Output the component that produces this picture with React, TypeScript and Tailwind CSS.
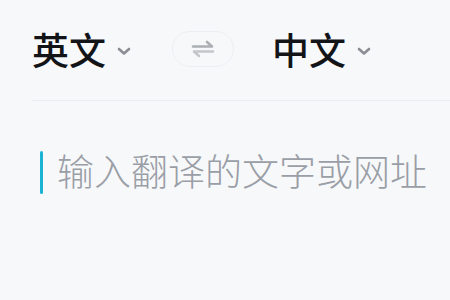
import React from "react";

function Chevron() {
  return (
    <svg width="14" height="9" viewBox="0 0 14 9" className="ml-[11px] mt-[4px]">
      <path d="M2 2l5 4.5L12 2" fill="none" stroke="#8a8d93" strokeWidth="2.6" strokeLinecap="round" strokeLinejoin="round" />
    </svg>
  );
}

function SwapIcon() {
  return (
    <svg width="24" height="18" viewBox="0 0 24 18">
      <path d="M2 6.5h19M16 2l5 4.5" fill="none" stroke="#acafb3" strokeWidth="2.6" strokeLinecap="round" strokeLinejoin="round" />
      <path d="M22 11.5H3M8 16l-5-4.5" fill="none" stroke="#c4c6ca" strokeWidth="2.6" strokeLinecap="round" strokeLinejoin="round" />
    </svg>
  );
}

export default function App() {
  return (
    <div
      className="h-[300px] w-[450px] overflow-hidden bg-[#f7f8fa]"
      style={{ fontFamily: '"Noto Sans CJK SC", "Noto Sans", sans-serif' }}
    >
      <div className="ml-[32px] flex h-[101px] items-center border-b border-[#eceef1] pb-[2px]">
        <div className="flex items-center">
          <span className="text-[37px] font-medium leading-none text-[#121418]">英文</span>
          <Chevron />
        </div>
        <button className="ml-[41px] flex h-[36px] w-[62px] items-center justify-center rounded-full border border-[#eceef1]">
          <SwapIcon />
        </button>
        <div className="ml-[38px] flex items-center">
          <span className="text-[37px] font-medium leading-none text-[#121418]">中文</span>
          <Chevron />
        </div>
      </div>
      <div className="ml-[40px] mt-[50px] flex items-center whitespace-nowrap">
        <div className="h-[43px] w-[3px] shrink-0 rounded-full bg-[#1ab3d6]" />
        <span className="-mt-[5px] ml-[14px] text-[37px] font-light leading-none text-[#9a9ea6]">输入翻译的文字或网址</span>
      </div>
    </div>
  );
}
